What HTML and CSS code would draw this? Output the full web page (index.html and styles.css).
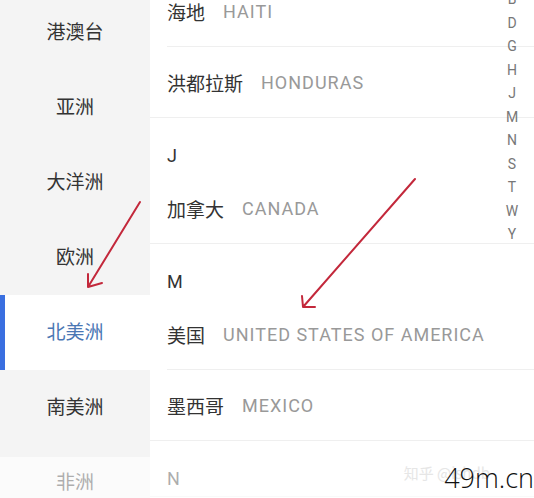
FILE: index.html
```
<!DOCTYPE html>
<html lang="zh">
<head>
<meta charset="utf-8">
<link rel="stylesheet" href="styles.css">
</head>
<body>
<div class="screen">
  <nav class="side">
    <div class="side-item">港澳台</div>
    <div class="side-item">亚洲</div>
    <div class="side-item">大洋洲</div>
    <div class="side-item">欧洲</div>
    <div class="side-item active">北美洲</div>
    <div class="side-item">南美洲</div>
    <div class="side-item">非洲</div>
  </nav>
  <main class="list">
    <section class="group">
      <div class="row"><div class="row-in"><span class="cn">海地</span><span class="en">HAITI</span></div></div>
      <div class="row"><div class="row-in"><span class="cn">洪都拉斯</span><span class="en">HONDURAS</span></div></div>
    </section>
    <section class="group">
      <div class="head">J</div>
      <div class="row"><div class="row-in"><span class="cn">加拿大</span><span class="en">CANADA</span></div></div>
    </section>
    <section class="group">
      <div class="head">M</div>
      <div class="row"><div class="row-in"><span class="cn">美国</span><span class="en">UNITED STATES OF AMERICA</span></div></div>
      <div class="row"><div class="row-in"><span class="cn">墨西哥</span><span class="en">MEXICO</span></div></div>
    </section>
    <section class="group">
      <div class="head">N</div>
    </section>
  </main>
  <ul class="index">
    <li>B</li><li>D</li><li>G</li><li>H</li><li>J</li><li>M</li><li>N</li><li>S</li><li>T</li><li>W</li><li>Y</li>
  </ul>
  <div class="fade"></div>
  <svg class="arrows" width="534" height="498" viewBox="0 0 534 498">
    <g fill="none" stroke="#c3283b" stroke-width="2" stroke-linecap="round" stroke-linejoin="round">
      <path d="M140 202 L88 287 M88 274 L88 287 L102 283"/>
      <path d="M415 179 L303 307 M302 296 L303 307 L315 307"/>
    </g>
  </svg>
  <div class="mark"><span class="zh">知乎 @ishdb</span><span class="site">49m.cn</span></div>
</div>
</body>
</html>
```

FILE: styles.css
```
* { box-sizing: border-box; }
html, body { margin: 0; padding: 0; }
body {
  width: 534px;
  height: 498px;
  overflow: hidden;
  background: #fff;
  font-family: Roboto, "Noto Sans CJK SC", sans-serif;
  color: #333;
}
.screen {
  position: relative;
  width: 534px;
  height: 498px;
  overflow: hidden;
  display: flex;
}
.side {
  width: 150px;
  flex: none;
  background: #f4f4f4;
  margin-top: -5px;
  display: flex;
  flex-direction: column;
}
.side-item {
  height: 75px;
  flex: none;
  display: flex;
  align-items: center;
  justify-content: center;
  padding-bottom: 4px;
  font-family: "Noto Sans CJK SC", sans-serif;
  font-size: 19px;
  color: #333;
}
.side-item.active {
  background: #fff;
  color: #4a77b4;
  border-left: 5px solid #3a6fe0;
  padding-right: 5px;
}
.list {
  flex: 1;
  margin-top: -24px;
  display: flex;
  flex-direction: column;
}
.group {
  border-bottom: 1px solid #efefef;
}
.head {
  height: 55px;
  padding: 26px 0 0 17px;
  font-size: 18px;
  line-height: 24px;
  color: #333;
}
.row {
  padding-left: 17px;
}
.row-in {
  height: 71px;
  display: flex;
  align-items: center;
  gap: 18px;
  border-bottom: 1px solid #efefef;
}
.row:last-child .row-in {
  height: 70px;
  border-bottom: none;
}
.cn {
  font-family: "Noto Sans CJK SC", sans-serif;
  font-size: 19px;
  color: #333;
}
.en {
  font-size: 18px;
  color: #999;
  letter-spacing: 1px;
}
.index {
  position: absolute;
  top: -12px;
  right: 12px;
  width: 20px;
  margin: 0;
  padding: 0;
  list-style: none;
  display: flex;
  flex-direction: column;
  align-items: center;
}
.index li {
  height: 23.5px;
  line-height: 23.5px;
  font-size: 14px;
  color: #777;
}
.fade {
  position: absolute;
  left: 0;
  right: 0;
  bottom: 0;
  height: 41px;
  background: rgba(255, 255, 255, 0.6);
}
.arrows {
  position: absolute;
  left: 0;
  top: 0;
}
.mark {
  position: absolute;
  right: 0;
  bottom: 0;
  height: 40px;
}
.mark .zh {
  position: absolute;
  right: 44px;
  top: 4px;
  white-space: nowrap;
  font-family: "Noto Sans CJK SC", sans-serif;
  font-size: 15px;
  color: #e6e6e6;
}
.mark .site {
  position: absolute;
  right: 0;
  top: 3px;
  font-family: "Open Sans", sans-serif;
  font-weight: 300;
  font-size: 27px;
  line-height: 34px;
  color: #111;
  white-space: nowrap;
}
```
